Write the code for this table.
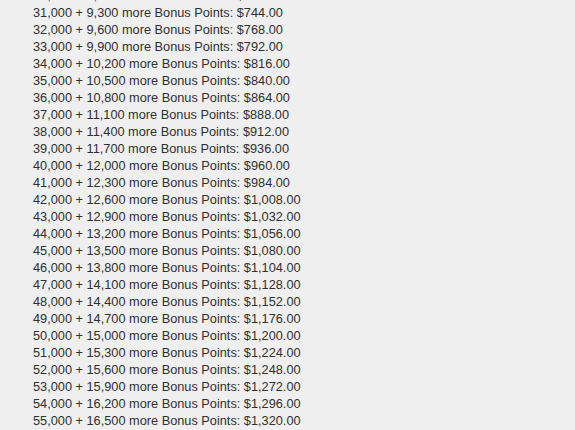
import React from 'react';

const fmt = (n: number) => n.toLocaleString('en-US');
const money = (n: number) =>
  '$' + n.toLocaleString('en-US', { minimumFractionDigits: 2, maximumFractionDigits: 2 });

const rows = Array.from({ length: 26 }, (_, i) => {
  const base = 30000 + i * 1000;
  const bonus = base * 0.3;
  const price = base * 0.024;
  return `${fmt(base)} + ${fmt(bonus)} more Bonus Points: ${money(price)}`;
});

const App: React.FC = () => {
  return (
    <div className="w-[575px] h-[430px] overflow-hidden bg-[#efefef]">
      <ul
        className="-mt-[13px] pl-[33px] text-[12.75px] leading-[17px] text-[#303030]"
        style={{ fontFamily: '"Liberation Sans", Arial, sans-serif' }}
      >
        {rows.map(r => (
          <li key={r}>{r}</li>
        ))}
      </ul>
    </div>
  );
};

export default App;
